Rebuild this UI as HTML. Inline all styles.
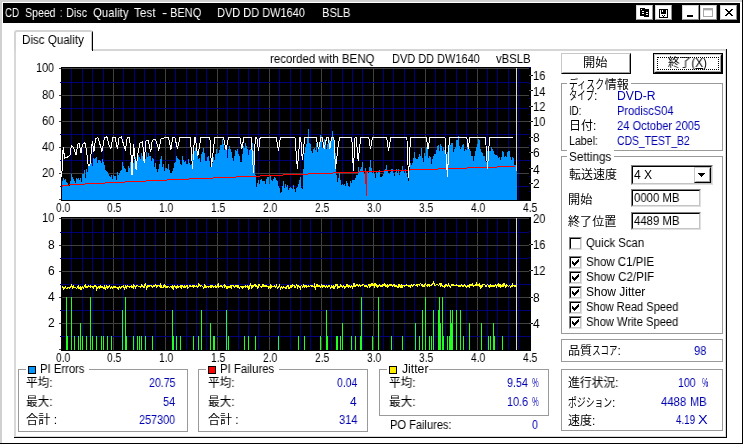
<!DOCTYPE html>
<html lang="ja"><head><meta charset="utf-8"><title>CD Speed : Disc Quality Test</title>
<style>
html,body{margin:0;padding:0;background:#fff}
body{width:743px;height:444px;overflow:hidden;position:relative;font-family:"Liberation Sans", "Noto Sans CJK JP", "IPAGothic", sans-serif;font-size:12px;line-height:12px;color:#000}
.win{position:absolute;left:0;top:0;width:743px;height:444px;background:#fff;overflow:hidden}
.t{will-change:transform}
.abs,.win div,.win span.t,.win svg{position:absolute}
.t{white-space:pre;transform-origin:0 0;line-height:12px;height:12px}
.k{display:inline-block;height:12px;vertical-align:top;position:relative}
.k span{display:inline-block;transform-origin:0 0;position:absolute;left:0;top:0;white-space:pre}
.t13{font-size:13px;line-height:13px;height:13px}
.glab{background:transparent}
.grp{border:1px solid #9a9a9a;box-sizing:border-box}
.btn{box-sizing:border-box;background:#fff;border:1px solid;border-color:#c8c8c8 #000 #000 #c8c8c8}
.btn i{position:absolute;left:0;top:0;right:0;bottom:0;border:1px solid;border-color:#fff #a0a0a0 #a0a0a0 #fff}
.sunk{box-sizing:border-box;background:#fff;border:1px solid;border-color:#808080 #e0e0e0 #e0e0e0 #808080}
.sunk i{position:absolute;left:0;top:0;right:0;bottom:0;border:1px solid;border-color:#000 #c4c4c4 #c4c4c4 #000}
.cb{width:13px;height:13px}
.tb{box-sizing:border-box;width:17px;height:15px;background:#fff;border:1px solid;border-color:#d8d8d8 #909090 #909090 #d8d8d8}
</style></head><body>
<div class="win">
<div style="left:0;top:0;width:743px;height:2px;background:#d0d0d0"></div><div style="left:0;top:0;width:2px;height:444px;background:#d0d0d0"></div><div style="left:742px;top:0;width:1px;height:444px;background:#000"></div><div style="left:0;top:443px;width:743px;height:1px;background:#000"></div><div class="titlebar" style="left:3px;top:3px;width:737px;height:20px;background:#000"></div>
<div class="tb" style="left:636px;top:5px"><svg width="17" height="15" style="left:-1px;top:-1px" shape-rendering="crispEdges"><rect x="4" y="3" width="5" height="8" fill="#000"/><rect x="8" y="4" width="5" height="8" fill="#000"/><rect x="6" y="6" width="2" height="1" fill="#fff"/><rect x="6" y="8" width="2" height="1" fill="#fff"/><rect x="10" y="7" width="2" height="1" fill="#fff"/><rect x="10" y="9" width="2" height="1" fill="#fff"/><rect x="5" y="4" width="1" height="1" fill="#fff"/></svg></div><div class="tb" style="left:655px;top:5px"><svg width="17" height="15" style="left:-1px;top:-1px" shape-rendering="crispEdges"><rect x="4" y="4" width="9" height="9" fill="#000"/><rect x="5" y="5" width="1" height="7" fill="#fff"/><rect x="11" y="5" width="1" height="7" fill="#fff"/><rect x="6" y="9" width="5" height="3" fill="#fff"/><rect x="7" y="5" width="1" height="2" fill="#fff"/><rect x="7" y="10" width="1" height="1" fill="#000"/><rect x="8" y="11" width="1" height="1" fill="#000"/><rect x="9" y="10" width="1" height="1" fill="#000"/></svg></div><div class="tb" style="left:682px;top:5px"><svg width="17" height="15" style="left:-1px;top:-1px" shape-rendering="crispEdges"><rect x="5" y="10" width="6" height="2" fill="#000"/></svg></div><div class="tb" style="left:700px;top:5px"><svg width="17" height="15" style="left:-1px;top:-1px" shape-rendering="crispEdges"><rect x="3" y="3" width="10" height="2" fill="#a8a8a8"/><rect x="3" y="5" width="1" height="7" fill="#a8a8a8"/><rect x="12" y="5" width="1" height="7" fill="#a8a8a8"/><rect x="3" y="11" width="10" height="1" fill="#a8a8a8"/><rect x="4" y="5" width="8" height="1" fill="#e0e0e0"/></svg></div><div class="tb" style="left:720px;top:5px"><svg width="17" height="15" style="left:-1px;top:-1px" shape-rendering="crispEdges"><rect x="5" y="4" width="1" height="1" fill="#000"/><rect x="6" y="4" width="1" height="1" fill="#000"/><rect x="11" y="4" width="1" height="1" fill="#000"/><rect x="12" y="4" width="1" height="1" fill="#000"/><rect x="6" y="5" width="1" height="1" fill="#000"/><rect x="7" y="5" width="1" height="1" fill="#000"/><rect x="10" y="5" width="1" height="1" fill="#000"/><rect x="11" y="5" width="1" height="1" fill="#000"/><rect x="7" y="6" width="1" height="1" fill="#000"/><rect x="8" y="6" width="1" height="1" fill="#000"/><rect x="9" y="6" width="1" height="1" fill="#000"/><rect x="10" y="6" width="1" height="1" fill="#000"/><rect x="8" y="7" width="1" height="1" fill="#000"/><rect x="9" y="7" width="1" height="1" fill="#000"/><rect x="7" y="8" width="1" height="1" fill="#000"/><rect x="8" y="8" width="1" height="1" fill="#000"/><rect x="9" y="8" width="1" height="1" fill="#000"/><rect x="10" y="8" width="1" height="1" fill="#000"/><rect x="6" y="9" width="1" height="1" fill="#000"/><rect x="7" y="9" width="1" height="1" fill="#000"/><rect x="10" y="9" width="1" height="1" fill="#000"/><rect x="11" y="9" width="1" height="1" fill="#000"/><rect x="5" y="10" width="1" height="1" fill="#000"/><rect x="6" y="10" width="1" height="1" fill="#000"/><rect x="11" y="10" width="1" height="1" fill="#000"/><rect x="12" y="10" width="1" height="1" fill="#000"/></svg></div>
<div style="left:15px;top:49px;width:711px;height:2px;background:#d6d6d6"></div><div style="left:14px;top:32px;width:2px;height:405px;background:#d8d8d8"></div><div style="left:14px;top:437px;width:713px;height:1px;background:#000"></div><div style="left:15px;top:436px;width:711px;height:1px;background:#d8d8d8"></div><div style="left:726px;top:49px;width:1px;height:389px;background:#000"></div><div style="left:725px;top:50px;width:1px;height:387px;background:#d8d8d8"></div><div style="left:14px;top:30px;width:79px;height:21px;box-sizing:border-box;background:#fff;border-top:2px solid #d4d4d4;border-left:2px solid #d4d4d4;border-right:1px solid #000;border-radius:3px 3px 0 0"></div><div style="left:91px;top:33px;width:1px;height:17px;background:#c8c8c8"></div><div style="left:16px;top:49px;width:75px;height:2px;background:#fff"></div>
<svg width="743" height="444" viewBox="0 0 743 444" style="left:0;top:0" shape-rendering="crispEdges"><rect x="61" y="67" width="470" height="134" fill="#000"/><rect x="71" y="68" width="1" height="132" fill="#000078"/><rect x="82" y="68" width="1" height="132" fill="#000078"/><rect x="92" y="68" width="1" height="132" fill="#000078"/><rect x="103" y="68" width="1" height="132" fill="#000078"/><rect x="113" y="68" width="1" height="132" fill="#404040"/><rect x="123" y="68" width="1" height="132" fill="#000078"/><rect x="134" y="68" width="1" height="132" fill="#000078"/><rect x="144" y="68" width="1" height="132" fill="#000078"/><rect x="155" y="68" width="1" height="132" fill="#000078"/><rect x="165" y="68" width="1" height="132" fill="#404040"/><rect x="175" y="68" width="1" height="132" fill="#000078"/><rect x="186" y="68" width="1" height="132" fill="#000078"/><rect x="196" y="68" width="1" height="132" fill="#000078"/><rect x="206" y="68" width="1" height="132" fill="#000078"/><rect x="217" y="68" width="1" height="132" fill="#404040"/><rect x="227" y="68" width="1" height="132" fill="#000078"/><rect x="238" y="68" width="1" height="132" fill="#000078"/><rect x="248" y="68" width="1" height="132" fill="#000078"/><rect x="258" y="68" width="1" height="132" fill="#000078"/><rect x="269" y="68" width="1" height="132" fill="#404040"/><rect x="279" y="68" width="1" height="132" fill="#000078"/><rect x="290" y="68" width="1" height="132" fill="#000078"/><rect x="300" y="68" width="1" height="132" fill="#000078"/><rect x="310" y="68" width="1" height="132" fill="#000078"/><rect x="321" y="68" width="1" height="132" fill="#404040"/><rect x="331" y="68" width="1" height="132" fill="#000078"/><rect x="342" y="68" width="1" height="132" fill="#000078"/><rect x="352" y="68" width="1" height="132" fill="#000078"/><rect x="362" y="68" width="1" height="132" fill="#000078"/><rect x="373" y="68" width="1" height="132" fill="#404040"/><rect x="383" y="68" width="1" height="132" fill="#000078"/><rect x="393" y="68" width="1" height="132" fill="#000078"/><rect x="404" y="68" width="1" height="132" fill="#000078"/><rect x="414" y="68" width="1" height="132" fill="#000078"/><rect x="425" y="68" width="1" height="132" fill="#404040"/><rect x="435" y="68" width="1" height="132" fill="#000078"/><rect x="445" y="68" width="1" height="132" fill="#000078"/><rect x="456" y="68" width="1" height="132" fill="#000078"/><rect x="466" y="68" width="1" height="132" fill="#000078"/><rect x="477" y="68" width="1" height="132" fill="#404040"/><rect x="487" y="68" width="1" height="132" fill="#000078"/><rect x="497" y="68" width="1" height="132" fill="#000078"/><rect x="508" y="68" width="1" height="132" fill="#000078"/><rect x="518" y="68" width="1" height="132" fill="#000078"/><rect x="62" y="68" width="467" height="1" fill="#404040"/><rect x="59" y="68" width="2" height="1" fill="#404040"/><rect x="62" y="82" width="467" height="1" fill="#000078"/><rect x="60" y="82" width="2" height="1" fill="#000078"/><rect x="62" y="95" width="467" height="1" fill="#404040"/><rect x="59" y="95" width="2" height="1" fill="#404040"/><rect x="62" y="108" width="467" height="1" fill="#000078"/><rect x="60" y="108" width="2" height="1" fill="#000078"/><rect x="62" y="121" width="467" height="1" fill="#404040"/><rect x="59" y="121" width="2" height="1" fill="#404040"/><rect x="62" y="134" width="467" height="1" fill="#000078"/><rect x="60" y="134" width="2" height="1" fill="#000078"/><rect x="62" y="147" width="467" height="1" fill="#404040"/><rect x="59" y="147" width="2" height="1" fill="#404040"/><rect x="62" y="160" width="467" height="1" fill="#000078"/><rect x="60" y="160" width="2" height="1" fill="#000078"/><rect x="62" y="173" width="467" height="1" fill="#404040"/><rect x="59" y="173" width="2" height="1" fill="#404040"/><rect x="62" y="186" width="467" height="1" fill="#000078"/><rect x="60" y="186" width="2" height="1" fill="#000078"/><rect x="59" y="199" width="2" height="1" fill="#404040"/><rect x="61" y="217" width="470" height="134" fill="#000"/><rect x="71" y="218" width="1" height="132" fill="#000078"/><rect x="82" y="218" width="1" height="132" fill="#000078"/><rect x="92" y="218" width="1" height="132" fill="#000078"/><rect x="103" y="218" width="1" height="132" fill="#000078"/><rect x="113" y="218" width="1" height="132" fill="#404040"/><rect x="123" y="218" width="1" height="132" fill="#000078"/><rect x="134" y="218" width="1" height="132" fill="#000078"/><rect x="144" y="218" width="1" height="132" fill="#000078"/><rect x="155" y="218" width="1" height="132" fill="#000078"/><rect x="165" y="218" width="1" height="132" fill="#404040"/><rect x="175" y="218" width="1" height="132" fill="#000078"/><rect x="186" y="218" width="1" height="132" fill="#000078"/><rect x="196" y="218" width="1" height="132" fill="#000078"/><rect x="206" y="218" width="1" height="132" fill="#000078"/><rect x="217" y="218" width="1" height="132" fill="#404040"/><rect x="227" y="218" width="1" height="132" fill="#000078"/><rect x="238" y="218" width="1" height="132" fill="#000078"/><rect x="248" y="218" width="1" height="132" fill="#000078"/><rect x="258" y="218" width="1" height="132" fill="#000078"/><rect x="269" y="218" width="1" height="132" fill="#404040"/><rect x="279" y="218" width="1" height="132" fill="#000078"/><rect x="290" y="218" width="1" height="132" fill="#000078"/><rect x="300" y="218" width="1" height="132" fill="#000078"/><rect x="310" y="218" width="1" height="132" fill="#000078"/><rect x="321" y="218" width="1" height="132" fill="#404040"/><rect x="331" y="218" width="1" height="132" fill="#000078"/><rect x="342" y="218" width="1" height="132" fill="#000078"/><rect x="352" y="218" width="1" height="132" fill="#000078"/><rect x="362" y="218" width="1" height="132" fill="#000078"/><rect x="373" y="218" width="1" height="132" fill="#404040"/><rect x="383" y="218" width="1" height="132" fill="#000078"/><rect x="393" y="218" width="1" height="132" fill="#000078"/><rect x="404" y="218" width="1" height="132" fill="#000078"/><rect x="414" y="218" width="1" height="132" fill="#000078"/><rect x="425" y="218" width="1" height="132" fill="#404040"/><rect x="435" y="218" width="1" height="132" fill="#000078"/><rect x="445" y="218" width="1" height="132" fill="#000078"/><rect x="456" y="218" width="1" height="132" fill="#000078"/><rect x="466" y="218" width="1" height="132" fill="#000078"/><rect x="477" y="218" width="1" height="132" fill="#404040"/><rect x="487" y="218" width="1" height="132" fill="#000078"/><rect x="497" y="218" width="1" height="132" fill="#000078"/><rect x="508" y="218" width="1" height="132" fill="#000078"/><rect x="518" y="218" width="1" height="132" fill="#000078"/><rect x="62" y="218" width="467" height="1" fill="#404040"/><rect x="59" y="218" width="2" height="1" fill="#404040"/><rect x="62" y="232" width="467" height="1" fill="#000078"/><rect x="60" y="232" width="2" height="1" fill="#000078"/><rect x="62" y="245" width="467" height="1" fill="#404040"/><rect x="59" y="245" width="2" height="1" fill="#404040"/><rect x="62" y="258" width="467" height="1" fill="#000078"/><rect x="60" y="258" width="2" height="1" fill="#000078"/><rect x="62" y="271" width="467" height="1" fill="#404040"/><rect x="59" y="271" width="2" height="1" fill="#404040"/><rect x="62" y="284" width="467" height="1" fill="#000078"/><rect x="60" y="284" width="2" height="1" fill="#000078"/><rect x="62" y="297" width="467" height="1" fill="#404040"/><rect x="59" y="297" width="2" height="1" fill="#404040"/><rect x="62" y="310" width="467" height="1" fill="#000078"/><rect x="60" y="310" width="2" height="1" fill="#000078"/><rect x="62" y="323" width="467" height="1" fill="#404040"/><rect x="59" y="323" width="2" height="1" fill="#404040"/><rect x="62" y="336" width="467" height="1" fill="#000078"/><rect x="60" y="336" width="2" height="1" fill="#000078"/><rect x="59" y="349" width="2" height="1" fill="#404040"/><rect x="529" y="191" width="2" height="1" fill="#000078"/><rect x="529" y="183" width="2" height="1" fill="#606060"/><rect x="531" y="183" width="2" height="1" fill="#000"/><rect x="529" y="176" width="2" height="1" fill="#000078"/><rect x="529" y="168" width="2" height="1" fill="#606060"/><rect x="531" y="168" width="2" height="1" fill="#000"/><rect x="529" y="160" width="2" height="1" fill="#000078"/><rect x="529" y="152" width="2" height="1" fill="#606060"/><rect x="531" y="152" width="2" height="1" fill="#000"/><rect x="529" y="145" width="2" height="1" fill="#000078"/><rect x="529" y="137" width="2" height="1" fill="#606060"/><rect x="531" y="137" width="2" height="1" fill="#000"/><rect x="529" y="129" width="2" height="1" fill="#000078"/><rect x="529" y="121" width="2" height="1" fill="#606060"/><rect x="531" y="121" width="2" height="1" fill="#000"/><rect x="529" y="114" width="2" height="1" fill="#000078"/><rect x="529" y="106" width="2" height="1" fill="#606060"/><rect x="531" y="106" width="2" height="1" fill="#000"/><rect x="529" y="98" width="2" height="1" fill="#000078"/><rect x="529" y="90" width="2" height="1" fill="#606060"/><rect x="531" y="90" width="2" height="1" fill="#000"/><rect x="529" y="83" width="2" height="1" fill="#000078"/><rect x="529" y="75" width="2" height="1" fill="#606060"/><rect x="531" y="75" width="2" height="1" fill="#000"/><rect x="529" y="67" width="2" height="1" fill="#000078"/><rect x="529" y="336" width="2" height="1" fill="#000078"/><rect x="529" y="323" width="2" height="1" fill="#606060"/><rect x="531" y="323" width="2" height="1" fill="#000"/><rect x="529" y="310" width="2" height="1" fill="#000078"/><rect x="529" y="297" width="2" height="1" fill="#606060"/><rect x="531" y="297" width="2" height="1" fill="#000"/><rect x="529" y="284" width="2" height="1" fill="#000078"/><rect x="529" y="270" width="2" height="1" fill="#606060"/><rect x="531" y="270" width="2" height="1" fill="#000"/><rect x="529" y="257" width="2" height="1" fill="#000078"/><rect x="529" y="244" width="2" height="1" fill="#606060"/><rect x="531" y="244" width="2" height="1" fill="#000"/><rect x="529" y="231" width="2" height="1" fill="#000078"/><path d="M62 200V181h1V178h1V180h1V179h1V182h1V183h1V185h1V186h1V181h1V174h1V177h1V179h1V181h1V183h1V178h1V179h1V178h1V180h1V178h1V182h1V174h1V174h1V170h1V178h1V169h1V172h1V165h1V165h1V163h1V163h1V166h1V158h1V159h1V158h1V157h1V163h1V160h1V160h1V161h1V163h1V159h1V162h1V165h1V170h1V171h1V172h1V174h1V176h1V177h1V175h1V179h1V175h1V176h1V176h1V180h1V172h1V175h1V173h1V171h1V170h1V162h1V166h1V168h1V169h1V172h1V172h1V166h1V168h1V162h1V164h1V162h1V163h1V160h1V157h1V161h1V161h1V155h1V157h1V159h1V153h1V156h1V158h1V156h1V159h1V152h1V157h1V153h1V156h1V156h1V161h1V158h1V159h1V167h1V163h1V169h1V172h1V169h1V164h1V159h1V156h1V167h1V164h1V171h1V168h1V168h1V169h1V164h1V170h1V173h1V173h1V171h1V168h1V163h1V162h1V156h1V158h1V159h1V160h1V164h1V165h1V156h1V160h1V162h1V161h1V164h1V164h1V159h1V163h1V165h1V164h1V154h1V154h1V151h1V148h1V150h1V156h1V159h1V158h1V162h1V154h1V152h1V148h1V153h1V161h1V161h1V157h1V156h1V161h1V167h1V164h1V163h1V157h1V160h1V154h1V149h1V154h1V153h1V150h1V145h1V145h1V139h1V144h1V150h1V149h1V148h1V158h1V149h1V146h1V149h1V152h1V158h1V161h1V156h1V150h1V151h1V149h1V154h1V156h1V162h1V162h1V154h1V146h1V148h1V143h1V146h1V149h1V155h1V150h1V149h1V147h1V143h1V151h1V159h1V175h1V187h1V183h1V180h1V184h1V180h1V179h1V181h1V181h1V181h1V184h1V179h1V177h1V177h1V184h1V176h1V180h1V181h1V179h1V177h1V178h1V180h1V181h1V186h1V188h1V193h1V192h1V186h1V181h1V188h1V184h1V187h1V185h1V190h1V188h1V187h1V188h1V189h1V185h1V189h1V192h1V188h1V187h1V184h1V180h1V177h1V188h1V189h1V169h1V153h1V147h1V144h1V138h1V129h1V143h1V144h1V151h1V153h1V149h1V148h1V150h1V143h1V152h1V149h1V144h1V135h1V141h1V148h1V143h1V139h1V140h1V149h1V144h1V140h1V140h1V141h1V139h1V131h1V140h1V151h1V153h1V175h1V182h1V178h1V173h1V180h1V185h1V184h1V185h1V184h1V186h1V181h1V183h1V186h1V187h1V181h1V183h1V180h1V180h1V180h1V178h1V175h1V175h1V167h1V172h1V169h1V167h1V162h1V172h1V174h1V168h1V172h1V171h1V173h1V167h1V160h1V168h1V173h1V171h1V174h1V178h1V172h1V173h1V171h1V170h1V177h1V177h1V176h1V174h1V170h1V169h1V165h1V170h1V173h1V174h1V172h1V169h1V169h1V173h1V176h1V172h1V169h1V173h1V169h1V175h1V172h1V171h1V166h1V170h1V173h1V169h1V173h1V177h1V181h1V171h1V163h1V165h1V163h1V158h1V152h1V158h1V159h1V159h1V157h1V154h1V156h1V148h1V158h1V162h1V153h1V156h1V147h1V145h1V158h1V156h1V157h1V164h1V159h1V156h1V154h1V154h1V150h1V146h1V145h1V151h1V144h1V146h1V151h1V147h1V150h1V153h1V155h1V152h1V145h1V140h1V145h1V143h1V143h1V152h1V149h1V147h1V140h1V140h1V136h1V146h1V149h1V147h1V145h1V144h1V151h1V149h1V150h1V145h1V149h1V149h1V151h1V156h1V156h1V161h1V156h1V151h1V147h1V144h1V139h1V140h1V149h1V152h1V153h1V156h1V156h1V161h1V162h1V151h1V150h1V151h1V151h1V147h1V149h1V151h1V154h1V155h1V155h1V156h1V158h1V157h1V160h1V157h1V151h1V152h1V157h1V156h1V157h1V152h1V151h1V151h1V157h1V160h1V157h1V158h1V165h1V165h1V162h1V200Z" fill="#0096ff"/></svg><svg width="743" height="444" viewBox="0 0 743 444" style="left:0;top:0"><path d="M62 185h7v1h-7zM69 184h16v1h-16zM85 183h20v1h-20zM105 182h20v1h-20zM125 181h21v1h-21zM146 180h21v1h-21zM167 179h22v1h-22zM189 178h24v1h-24zM213 177h23v1h-23zM236 176h24v1h-24zM260 175h23v1h-23zM283 174h25v1h-25zM308 173h25v1h-25zM333 172h26v1h-26zM359 171h25v1h-25zM384 170h26v1h-26zM410 169h28v1h-28zM438 168h29v1h-29zM467 167h30v1h-30zM497 166h18v1h-18zM365 171h2v13h-2zM366 184h1v12h-1zM62 185h1v2h-1z" fill="#ff0000" shape-rendering="crispEdges"/><polyline points="61.5,176.6 62.3,168.5 63.1,147.5 64.7,158.0 67.2,157.2 70.4,154.8 71.2,145.8 73.6,147.5 76.1,154.8 77.7,144.2 79.3,143.4 80.9,153.1 82.6,144.2 85.0,142.6 86.6,150.7 88.2,166.1 89.9,165.3 92.3,141.0 93.9,152.3 95.5,138.5 98.0,137.7 100.4,145.8 102.0,151.5 104.5,137.7 106.9,136.9 109.3,145.8 110.9,149.1 112.6,137.7 115.0,136.9 117.4,149.1 119.1,137.7 121.5,136.9 123.9,145.8 125.5,149.9 127.2,137.7 129.6,137.7 131.2,157.2 132.0,175.0 133.6,144.2 136.1,170.2 137.7,154.8 140.1,142.6 142.6,141.8 144.2,162.9 145.8,141.0 148.2,140.2 150.7,152.3 152.3,140.2 155.5,139.4 158.8,149.9 161.2,138.5 165.3,137.7 168.5,137.7 170.9,149.9 172.6,137.7 174.8,137.7 175.0,137.7 177.4,149.1 179.9,137.7 190.4,137.7 192.5,168.5 194.5,137.7 195.3,137.7 197.7,156.4 200.9,137.7 209.9,137.7 211.5,166.9 214.7,137.7 223.6,137.7 226.1,149.9 228.5,137.7 239.9,137.7 241.8,149.1 243.9,137.7 251.2,137.7 253.6,173.4 255.3,137.7 256.9,137.7 258.5,150.7 260.1,137.7 276.3,137.7 278.5,150.7 280.4,137.7 294.8,137.7 295.0,137.7 297.4,168.5 299.9,137.7 300.7,137.7 302.3,160.4 304.7,137.7 316.1,137.7 318.5,149.1 320.9,137.7 322.2,137.7 324.2,149.1 326.6,137.7 328.2,137.7 329.9,149.1 331.5,137.7 333.9,137.7 335.5,168.5 338.0,147.5 339.6,137.7 351.8,137.7 353.4,171.0 355.0,137.7 356.3,137.7 358.2,161.2 360.7,137.7 368.8,137.7 370.4,149.1 372.5,137.7 386.6,137.7 388.6,150.7 390.7,137.7 406.9,137.7 408.5,177.5 410.5,137.7 414.8,137.7 415.0,137.7 426.4,137.7 428.0,149.1 429.9,137.7 445.0,137.7 447.4,176.6 449.4,137.7 466.9,137.7 468.2,149.1 469.8,137.7 485.5,137.7 487.5,168.5 489.6,137.7 512.8,137.7" fill="none" stroke="#fff" stroke-width="1" shape-rendering="crispEdges"/><rect x="516" y="68" width="1" height="103" fill="#d8d8d8" shape-rendering="crispEdges"/><rect x="516" y="218" width="1" height="132" fill="#d8d8d8" shape-rendering="crispEdges"/><rect x="66" y="297" width="1" height="53" fill="#20ff20" shape-rendering="crispEdges"/><rect x="67" y="336" width="1" height="14" fill="#20ff20" shape-rendering="crispEdges"/><rect x="71" y="297" width="1" height="53" fill="#20ff20" shape-rendering="crispEdges"/><rect x="74" y="336" width="1" height="14" fill="#20ff20" shape-rendering="crispEdges"/><rect x="78" y="336" width="1" height="14" fill="#20ff20" shape-rendering="crispEdges"/><rect x="80" y="323" width="1" height="27" fill="#20ff20" shape-rendering="crispEdges"/><rect x="82" y="336" width="1" height="14" fill="#20ff20" shape-rendering="crispEdges"/><rect x="86" y="336" width="1" height="14" fill="#20ff20" shape-rendering="crispEdges"/><rect x="90" y="297" width="1" height="53" fill="#20ff20" shape-rendering="crispEdges"/><rect x="92" y="336" width="1" height="14" fill="#20ff20" shape-rendering="crispEdges"/><rect x="96" y="336" width="1" height="14" fill="#20ff20" shape-rendering="crispEdges"/><rect x="101" y="336" width="1" height="14" fill="#20ff20" shape-rendering="crispEdges"/><rect x="103" y="336" width="1" height="14" fill="#20ff20" shape-rendering="crispEdges"/><rect x="107" y="336" width="1" height="14" fill="#20ff20" shape-rendering="crispEdges"/><rect x="111" y="336" width="1" height="14" fill="#20ff20" shape-rendering="crispEdges"/><rect x="122" y="310" width="1" height="40" fill="#20ff20" shape-rendering="crispEdges"/><rect x="125" y="297" width="1" height="53" fill="#20ff20" shape-rendering="crispEdges"/><rect x="126" y="336" width="1" height="14" fill="#20ff20" shape-rendering="crispEdges"/><rect x="133" y="336" width="1" height="14" fill="#20ff20" shape-rendering="crispEdges"/><rect x="137" y="336" width="1" height="14" fill="#20ff20" shape-rendering="crispEdges"/><rect x="139" y="336" width="1" height="14" fill="#20ff20" shape-rendering="crispEdges"/><rect x="141" y="336" width="1" height="14" fill="#20ff20" shape-rendering="crispEdges"/><rect x="145" y="336" width="1" height="14" fill="#20ff20" shape-rendering="crispEdges"/><rect x="152" y="336" width="1" height="14" fill="#20ff20" shape-rendering="crispEdges"/><rect x="172" y="310" width="1" height="40" fill="#20ff20" shape-rendering="crispEdges"/><rect x="173" y="336" width="1" height="14" fill="#20ff20" shape-rendering="crispEdges"/><rect x="176" y="336" width="1" height="14" fill="#20ff20" shape-rendering="crispEdges"/><rect x="180" y="336" width="1" height="14" fill="#20ff20" shape-rendering="crispEdges"/><rect x="193" y="336" width="1" height="14" fill="#20ff20" shape-rendering="crispEdges"/><rect x="198" y="336" width="1" height="14" fill="#20ff20" shape-rendering="crispEdges"/><rect x="201" y="310" width="1" height="40" fill="#20ff20" shape-rendering="crispEdges"/><rect x="210" y="323" width="1" height="27" fill="#20ff20" shape-rendering="crispEdges"/><rect x="213" y="336" width="1" height="14" fill="#20ff20" shape-rendering="crispEdges"/><rect x="214" y="336" width="1" height="14" fill="#20ff20" shape-rendering="crispEdges"/><rect x="226" y="310" width="1" height="40" fill="#20ff20" shape-rendering="crispEdges"/><rect x="228" y="336" width="1" height="14" fill="#20ff20" shape-rendering="crispEdges"/><rect x="244" y="336" width="1" height="14" fill="#20ff20" shape-rendering="crispEdges"/><rect x="248" y="336" width="1" height="14" fill="#20ff20" shape-rendering="crispEdges"/><rect x="255" y="336" width="1" height="14" fill="#20ff20" shape-rendering="crispEdges"/><rect x="278" y="336" width="1" height="14" fill="#20ff20" shape-rendering="crispEdges"/><rect x="298" y="336" width="1" height="14" fill="#20ff20" shape-rendering="crispEdges"/><rect x="304" y="336" width="1" height="14" fill="#20ff20" shape-rendering="crispEdges"/><rect x="320" y="336" width="1" height="14" fill="#20ff20" shape-rendering="crispEdges"/><rect x="326" y="310" width="1" height="40" fill="#20ff20" shape-rendering="crispEdges"/><rect x="327" y="336" width="1" height="14" fill="#20ff20" shape-rendering="crispEdges"/><rect x="336" y="336" width="1" height="14" fill="#20ff20" shape-rendering="crispEdges"/><rect x="337" y="336" width="1" height="14" fill="#20ff20" shape-rendering="crispEdges"/><rect x="340" y="336" width="1" height="14" fill="#20ff20" shape-rendering="crispEdges"/><rect x="342" y="323" width="1" height="27" fill="#20ff20" shape-rendering="crispEdges"/><rect x="351" y="336" width="1" height="14" fill="#20ff20" shape-rendering="crispEdges"/><rect x="355" y="336" width="1" height="14" fill="#20ff20" shape-rendering="crispEdges"/><rect x="360" y="336" width="1" height="14" fill="#20ff20" shape-rendering="crispEdges"/><rect x="361" y="297" width="1" height="53" fill="#20ff20" shape-rendering="crispEdges"/><rect x="372" y="336" width="1" height="14" fill="#20ff20" shape-rendering="crispEdges"/><rect x="378" y="297" width="1" height="53" fill="#20ff20" shape-rendering="crispEdges"/><rect x="391" y="336" width="1" height="14" fill="#20ff20" shape-rendering="crispEdges"/><rect x="402" y="336" width="1" height="14" fill="#20ff20" shape-rendering="crispEdges"/><rect x="415" y="323" width="1" height="27" fill="#20ff20" shape-rendering="crispEdges"/><rect x="419" y="336" width="1" height="14" fill="#20ff20" shape-rendering="crispEdges"/><rect x="422" y="310" width="1" height="40" fill="#20ff20" shape-rendering="crispEdges"/><rect x="425" y="297" width="1" height="53" fill="#20ff20" shape-rendering="crispEdges"/><rect x="429" y="336" width="1" height="14" fill="#20ff20" shape-rendering="crispEdges"/><rect x="431" y="336" width="1" height="14" fill="#20ff20" shape-rendering="crispEdges"/><rect x="433" y="310" width="1" height="40" fill="#20ff20" shape-rendering="crispEdges"/><rect x="438" y="310" width="1" height="40" fill="#20ff20" shape-rendering="crispEdges"/><rect x="439" y="297" width="1" height="53" fill="#20ff20" shape-rendering="crispEdges"/><rect x="440" y="323" width="1" height="27" fill="#20ff20" shape-rendering="crispEdges"/><rect x="442" y="297" width="1" height="53" fill="#20ff20" shape-rendering="crispEdges"/><rect x="443" y="336" width="1" height="14" fill="#20ff20" shape-rendering="crispEdges"/><rect x="447" y="336" width="1" height="14" fill="#20ff20" shape-rendering="crispEdges"/><rect x="449" y="336" width="1" height="14" fill="#20ff20" shape-rendering="crispEdges"/><rect x="450" y="310" width="1" height="40" fill="#20ff20" shape-rendering="crispEdges"/><rect x="451" y="323" width="1" height="27" fill="#20ff20" shape-rendering="crispEdges"/><rect x="452" y="310" width="1" height="40" fill="#20ff20" shape-rendering="crispEdges"/><rect x="456" y="310" width="1" height="40" fill="#20ff20" shape-rendering="crispEdges"/><rect x="460" y="310" width="1" height="40" fill="#20ff20" shape-rendering="crispEdges"/><rect x="463" y="336" width="1" height="14" fill="#20ff20" shape-rendering="crispEdges"/><rect x="469" y="323" width="1" height="27" fill="#20ff20" shape-rendering="crispEdges"/><rect x="481" y="323" width="1" height="27" fill="#20ff20" shape-rendering="crispEdges"/><rect x="488" y="336" width="1" height="14" fill="#20ff20" shape-rendering="crispEdges"/><rect x="490" y="336" width="1" height="14" fill="#20ff20" shape-rendering="crispEdges"/><rect x="493" y="323" width="1" height="27" fill="#20ff20" shape-rendering="crispEdges"/><rect x="494" y="336" width="1" height="14" fill="#20ff20" shape-rendering="crispEdges"/><rect x="502" y="336" width="1" height="14" fill="#20ff20" shape-rendering="crispEdges"/><polyline points="62.5,287.5 62.5,286.5 63.5,288.5 63.5,289.5 64.5,288.5 64.5,288.5 65.5,286.5 65.5,287.5 66.5,288.5 66.5,288.5 67.5,288.5 67.5,287.5 68.5,287.5 68.5,287.5 69.5,287.5 69.5,288.5 70.5,287.5 70.5,287.5 71.5,285.5 71.5,285.5 72.5,287.5 72.5,288.5 73.5,285.5 73.5,287.5 74.5,287.5 74.5,287.5 75.5,287.5 75.5,287.5 76.5,288.5 76.5,288.5 77.5,287.5 77.5,286.5 78.5,285.5 78.5,288.5 79.5,288.5 79.5,288.5 80.5,286.5 80.5,289.5 81.5,289.5 81.5,287.5 82.5,286.5 82.5,286.5 83.5,288.5 83.5,287.5 84.5,286.5 84.5,285.5 85.5,284.5 85.5,287.5 86.5,287.5 86.5,286.5 87.5,286.5 87.5,287.5 88.5,285.5 88.5,286.5 89.5,286.5 89.5,286.5 90.5,287.5 90.5,285.5 91.5,286.5 91.5,286.5 92.5,287.5 92.5,286.5 93.5,288.5 93.5,287.5 94.5,285.5 94.5,285.5 95.5,286.5 95.5,285.5 96.5,286.5 96.5,290.5 97.5,287.5 97.5,287.5 98.5,287.5 98.5,286.5 99.5,286.5 99.5,288.5 100.5,287.5 100.5,285.5 101.5,287.5 101.5,287.5 102.5,286.5 102.5,287.5 103.5,287.5 103.5,288.5 104.5,285.5 104.5,288.5 105.5,287.5 105.5,289.5 106.5,285.5 106.5,287.5 107.5,286.5 107.5,288.5 108.5,286.5 108.5,287.5 109.5,286.5 109.5,285.5 110.5,288.5 110.5,287.5 111.5,286.5 111.5,287.5 112.5,287.5 112.5,288.5 113.5,286.5 113.5,286.5 114.5,287.5 114.5,286.5 115.5,286.5 115.5,287.5 116.5,287.5 116.5,287.5 117.5,287.5 117.5,288.5 118.5,289.5 118.5,288.5 119.5,286.5 119.5,287.5 120.5,287.5 120.5,288.5 121.5,286.5 121.5,286.5 122.5,286.5 122.5,286.5 123.5,286.5 123.5,285.5 124.5,289.5 124.5,288.5 125.5,286.5 125.5,286.5 126.5,288.5 126.5,286.5 127.5,286.5 127.5,285.5 128.5,286.5 128.5,286.5 129.5,287.5 129.5,286.5 130.5,286.5 130.5,286.5 131.5,285.5 131.5,287.5 132.5,286.5 132.5,287.5 133.5,284.5 133.5,288.5 134.5,285.5 134.5,286.5 135.5,286.5 135.5,288.5 136.5,285.5 136.5,285.5 137.5,285.5 137.5,285.5 138.5,286.5 138.5,286.5 139.5,286.5 139.5,286.5 140.5,286.5 140.5,287.5 141.5,285.5 141.5,284.5 142.5,286.5 142.5,285.5 143.5,287.5 143.5,286.5 144.5,287.5 144.5,285.5 145.5,283.5 145.5,285.5 146.5,286.5 146.5,289.5 147.5,285.5 147.5,286.5 148.5,286.5 148.5,285.5 149.5,286.5 149.5,285.5 150.5,285.5 150.5,285.5 151.5,285.5 151.5,286.5 152.5,287.5 152.5,287.5 153.5,285.5 153.5,285.5 154.5,286.5 154.5,286.5 155.5,284.5 155.5,285.5 156.5,285.5 156.5,287.5 157.5,286.5 157.5,285.5 158.5,285.5 158.5,285.5 159.5,285.5 159.5,286.5 160.5,287.5 160.5,283.5 161.5,286.5 161.5,287.5 162.5,287.5 162.5,287.5 163.5,287.5 163.5,285.5 164.5,286.5 164.5,284.5 165.5,287.5 165.5,285.5 166.5,287.5 166.5,286.5 167.5,286.5 167.5,287.5 168.5,286.5 168.5,286.5 169.5,287.5 169.5,287.5 170.5,286.5 170.5,286.5 171.5,287.5 171.5,287.5 172.5,285.5 172.5,287.5 173.5,289.5 173.5,287.5 174.5,285.5 174.5,286.5 175.5,286.5 175.5,287.5 176.5,286.5 176.5,288.5 177.5,286.5 177.5,285.5 178.5,287.5 178.5,286.5 179.5,286.5 179.5,286.5 180.5,287.5 180.5,285.5 181.5,288.5 181.5,285.5 182.5,285.5 182.5,286.5 183.5,287.5 183.5,286.5 184.5,287.5 184.5,285.5 185.5,287.5 185.5,286.5 186.5,286.5 186.5,285.5 187.5,285.5 187.5,288.5 188.5,287.5 188.5,287.5 189.5,286.5 189.5,285.5 190.5,285.5 190.5,286.5 191.5,286.5 191.5,286.5 192.5,286.5 192.5,285.5 193.5,287.5 193.5,285.5 194.5,285.5 194.5,286.5 195.5,286.5 195.5,286.5 196.5,285.5 196.5,286.5 197.5,286.5 197.5,287.5 198.5,286.5 198.5,283.5 199.5,285.5 199.5,285.5 200.5,286.5 200.5,285.5 201.5,285.5 201.5,285.5 202.5,286.5 202.5,286.5 203.5,287.5 203.5,288.5 204.5,287.5 204.5,284.5 205.5,286.5 205.5,287.5 206.5,286.5 206.5,287.5 207.5,286.5 207.5,286.5 208.5,287.5 208.5,286.5 209.5,286.5 209.5,286.5 210.5,287.5 210.5,285.5 211.5,287.5 211.5,285.5 212.5,285.5 212.5,285.5 213.5,287.5 213.5,287.5 214.5,286.5 214.5,286.5 215.5,285.5 215.5,287.5 216.5,286.5 216.5,287.5 217.5,286.5 217.5,285.5 218.5,283.5 218.5,287.5 219.5,286.5 219.5,286.5 220.5,286.5 220.5,285.5 221.5,286.5 221.5,285.5 222.5,287.5 222.5,286.5 223.5,285.5 223.5,285.5 224.5,284.5 224.5,287.5 225.5,286.5 225.5,285.5 226.5,286.5 226.5,288.5 227.5,286.5 227.5,288.5 228.5,286.5 228.5,287.5 229.5,286.5 229.5,287.5 230.5,285.5 230.5,286.5 231.5,288.5 231.5,285.5 232.5,285.5 232.5,285.5 233.5,285.5 233.5,286.5 234.5,287.5 234.5,286.5 235.5,285.5 235.5,286.5 236.5,286.5 236.5,285.5 237.5,285.5 237.5,287.5 238.5,285.5 238.5,286.5 239.5,288.5 239.5,287.5 240.5,286.5 240.5,286.5 241.5,286.5 241.5,286.5 242.5,288.5 242.5,286.5 243.5,287.5 243.5,286.5 244.5,286.5 244.5,286.5 245.5,287.5 245.5,285.5 246.5,286.5 246.5,286.5 247.5,287.5 247.5,285.5 248.5,286.5 248.5,289.5 249.5,287.5 249.5,285.5 250.5,285.5 250.5,283.5 251.5,287.5 251.5,287.5 252.5,285.5 252.5,287.5 253.5,285.5 253.5,285.5 254.5,285.5 254.5,284.5 255.5,286.5 255.5,284.5 256.5,285.5 256.5,286.5 257.5,286.5 257.5,288.5 258.5,287.5 258.5,284.5 259.5,284.5 259.5,285.5 260.5,286.5 260.5,286.5 261.5,286.5 261.5,287.5 262.5,284.5 262.5,286.5 263.5,284.5 263.5,286.5 264.5,286.5 264.5,285.5 265.5,285.5 265.5,286.5 266.5,286.5 266.5,285.5 267.5,286.5 267.5,286.5 268.5,286.5 268.5,288.5 269.5,286.5 269.5,287.5 270.5,284.5 270.5,288.5 271.5,287.5 271.5,285.5 272.5,286.5 272.5,286.5 273.5,286.5 273.5,286.5 274.5,285.5 274.5,286.5 275.5,287.5 275.5,287.5 276.5,285.5 276.5,285.5 277.5,288.5 277.5,288.5 278.5,287.5 278.5,286.5 279.5,286.5 279.5,284.5 280.5,289.5 280.5,287.5 281.5,287.5 281.5,286.5 282.5,288.5 282.5,288.5 283.5,287.5 283.5,286.5 284.5,287.5 284.5,287.5 285.5,288.5 285.5,287.5 286.5,288.5 286.5,286.5 287.5,285.5 287.5,286.5 288.5,285.5 288.5,288.5 289.5,287.5 289.5,288.5 290.5,286.5 290.5,285.5 291.5,285.5 291.5,287.5 292.5,286.5 292.5,284.5 293.5,285.5 293.5,285.5 294.5,285.5 294.5,287.5 295.5,286.5 295.5,287.5 296.5,284.5 296.5,284.5 297.5,285.5 297.5,288.5 298.5,285.5 298.5,286.5 299.5,287.5 299.5,286.5 300.5,289.5 300.5,286.5 301.5,285.5 301.5,285.5 302.5,286.5 302.5,287.5 303.5,286.5 303.5,284.5 304.5,285.5 304.5,287.5 305.5,285.5 305.5,285.5 306.5,285.5 306.5,287.5 307.5,286.5 307.5,286.5 308.5,286.5 308.5,285.5 309.5,286.5 309.5,286.5 310.5,285.5 310.5,285.5 311.5,286.5 311.5,285.5 312.5,285.5 312.5,286.5 313.5,286.5 313.5,286.5 314.5,287.5 314.5,283.5 315.5,288.5 315.5,288.5 316.5,285.5 316.5,284.5 317.5,284.5 317.5,286.5 318.5,285.5 318.5,286.5 319.5,286.5 319.5,285.5 320.5,286.5 320.5,287.5 321.5,284.5 321.5,286.5 322.5,285.5 322.5,287.5 323.5,285.5 323.5,285.5 324.5,285.5 324.5,286.5 325.5,287.5 325.5,286.5 326.5,285.5 326.5,286.5 327.5,286.5 327.5,287.5 328.5,285.5 328.5,286.5 329.5,285.5 329.5,286.5 330.5,287.5 330.5,288.5 331.5,287.5 331.5,285.5 332.5,286.5 332.5,286.5 333.5,288.5 333.5,285.5 334.5,287.5 334.5,287.5 335.5,284.5 335.5,286.5 336.5,284.5 336.5,285.5 337.5,284.5 337.5,288.5 338.5,286.5 338.5,287.5 339.5,286.5 339.5,287.5 340.5,285.5 340.5,284.5 341.5,286.5 341.5,285.5 342.5,286.5 342.5,287.5 343.5,285.5 343.5,286.5 344.5,286.5 344.5,288.5 345.5,287.5 345.5,287.5 346.5,284.5 346.5,286.5 347.5,286.5 347.5,284.5 348.5,286.5 348.5,287.5 349.5,286.5 349.5,285.5 350.5,286.5 350.5,287.5 351.5,285.5 351.5,285.5 352.5,286.5 352.5,288.5 353.5,284.5 353.5,283.5 354.5,283.5 354.5,286.5 355.5,285.5 355.5,286.5 356.5,284.5 356.5,285.5 357.5,284.5 357.5,285.5 358.5,286.5 358.5,285.5 359.5,285.5 359.5,284.5 360.5,285.5 360.5,286.5 361.5,285.5 361.5,285.5 362.5,285.5 362.5,284.5 363.5,284.5 363.5,284.5 364.5,285.5 364.5,286.5 365.5,285.5 365.5,286.5 366.5,286.5 366.5,285.5 367.5,286.5 367.5,287.5 368.5,284.5 368.5,285.5 369.5,284.5 369.5,287.5 370.5,286.5 370.5,284.5 371.5,285.5 371.5,283.5 372.5,283.5 372.5,285.5 373.5,285.5 373.5,284.5 374.5,287.5 374.5,283.5 375.5,283.5 375.5,285.5 376.5,286.5 376.5,284.5 377.5,287.5 377.5,285.5 378.5,285.5 378.5,286.5 379.5,285.5 379.5,284.5 380.5,285.5 380.5,286.5 381.5,286.5 381.5,285.5 382.5,286.5 382.5,284.5 383.5,284.5 383.5,285.5 384.5,285.5 384.5,283.5 385.5,286.5 385.5,284.5 386.5,286.5 386.5,286.5 387.5,287.5 387.5,284.5 388.5,285.5 388.5,286.5 389.5,284.5 389.5,284.5 390.5,285.5 390.5,284.5 391.5,285.5 391.5,284.5 392.5,286.5 392.5,285.5 393.5,285.5 393.5,284.5 394.5,286.5 394.5,284.5 395.5,286.5 395.5,285.5 396.5,286.5 396.5,285.5 397.5,286.5 397.5,287.5 398.5,284.5 398.5,287.5 399.5,285.5 399.5,284.5 400.5,286.5 400.5,286.5 401.5,284.5 401.5,287.5 402.5,287.5 402.5,285.5 403.5,285.5 403.5,285.5 404.5,286.5 404.5,285.5 405.5,285.5 405.5,285.5 406.5,284.5 406.5,285.5 407.5,285.5 407.5,285.5 408.5,285.5 408.5,286.5 409.5,285.5 409.5,286.5 410.5,287.5 410.5,285.5 411.5,284.5 411.5,285.5 412.5,285.5 412.5,286.5 413.5,284.5 413.5,284.5 414.5,284.5 414.5,284.5 415.5,285.5 415.5,285.5 416.5,284.5 416.5,285.5 417.5,286.5 417.5,284.5 418.5,284.5 418.5,284.5 419.5,285.5 419.5,284.5 420.5,283.5 420.5,283.5 421.5,284.5 421.5,284.5 422.5,286.5 422.5,284.5 423.5,286.5 423.5,285.5 424.5,286.5 424.5,285.5 425.5,283.5 425.5,284.5 426.5,285.5 426.5,285.5 427.5,286.5 427.5,284.5 428.5,285.5 428.5,284.5 429.5,284.5 429.5,286.5 430.5,285.5 430.5,285.5 431.5,285.5 431.5,284.5 432.5,284.5 432.5,283.5 433.5,283.5 433.5,281.5 434.5,285.5 434.5,284.5 435.5,285.5 435.5,285.5 436.5,284.5 436.5,284.5 437.5,284.5 437.5,284.5 438.5,285.5 438.5,285.5 439.5,284.5 439.5,283.5 440.5,283.5 440.5,286.5 441.5,284.5 441.5,284.5 442.5,286.5 442.5,285.5 443.5,286.5 443.5,286.5 444.5,285.5 444.5,287.5 445.5,285.5 445.5,284.5 446.5,285.5 446.5,284.5 447.5,285.5 447.5,286.5 448.5,283.5 448.5,284.5 449.5,286.5 449.5,286.5 450.5,286.5 450.5,287.5 451.5,284.5 451.5,284.5 452.5,284.5 452.5,285.5 453.5,285.5 453.5,284.5 454.5,285.5 454.5,285.5 455.5,285.5 455.5,285.5 456.5,285.5 456.5,284.5 457.5,285.5 457.5,285.5 458.5,286.5 458.5,285.5 459.5,285.5 459.5,286.5 460.5,286.5 460.5,285.5 461.5,285.5 461.5,284.5 462.5,285.5 462.5,286.5 463.5,286.5 463.5,285.5 464.5,284.5 464.5,285.5 465.5,285.5 465.5,286.5 466.5,287.5 466.5,286.5 467.5,286.5 467.5,285.5 468.5,285.5 468.5,285.5 469.5,287.5 469.5,284.5 470.5,284.5 470.5,285.5 471.5,285.5 471.5,285.5 472.5,283.5 472.5,284.5 473.5,286.5 473.5,286.5 474.5,285.5 474.5,285.5 475.5,284.5 475.5,285.5 476.5,285.5 476.5,282.5 477.5,285.5 477.5,285.5 478.5,285.5 478.5,284.5 479.5,283.5 479.5,286.5 480.5,285.5 480.5,288.5 481.5,285.5 481.5,287.5 482.5,285.5 482.5,284.5 483.5,284.5 483.5,284.5 484.5,284.5 484.5,284.5 485.5,285.5 485.5,286.5 486.5,286.5 486.5,285.5 487.5,284.5 487.5,284.5 488.5,285.5 488.5,285.5 489.5,287.5 489.5,285.5 490.5,284.5 490.5,286.5 491.5,285.5 491.5,286.5 492.5,286.5 492.5,285.5 493.5,285.5 493.5,286.5 494.5,286.5 494.5,285.5 495.5,284.5 495.5,284.5 496.5,286.5 496.5,286.5 497.5,284.5 497.5,284.5 498.5,283.5 498.5,286.5 499.5,284.5 499.5,286.5 500.5,287.5 500.5,284.5 501.5,286.5 501.5,286.5 502.5,286.5 502.5,284.5 503.5,283.5 503.5,286.5 504.5,285.5 504.5,283.5 505.5,286.5 505.5,287.5 506.5,284.5 506.5,286.5 507.5,285.5 507.5,285.5 508.5,286.5 508.5,286.5 509.5,285.5 509.5,285.5 510.5,286.5 510.5,287.5 511.5,286.5 511.5,286.5 512.5,283.5 512.5,286.5 513.5,285.5 513.5,285.5 514.5,285.5 514.5,286.5 515.5,286.5 515.5,285.5 516.5,286.5" fill="none" stroke="#ffff10" stroke-width="1" shape-rendering="crispEdges"/></svg>
<div class="grp" style="left:18px;top:369px;width:170px;height:63px"></div><div class="grp" style="left:198px;top:369px;width:170px;height:63px"></div><div class="grp" style="left:379px;top:369px;width:170px;height:47px"></div><div style="left:26px;top:363px;width:63px;height:12px;background:#fff"></div><div style="left:28px;top:366px;width:8px;height:8px;box-sizing:border-box;border:1px solid #000;background:#0096ff"></div><div style="left:206px;top:363px;width:73px;height:12px;background:#fff"></div><div style="left:208px;top:366px;width:8px;height:8px;box-sizing:border-box;border:1px solid #000;background:#ff0000"></div><div style="left:387px;top:363px;width:42px;height:12px;background:#fff"></div><div style="left:389px;top:366px;width:8px;height:8px;box-sizing:border-box;border:1px solid #000;background:#ffee00"></div><div class="grp" style="left:561px;top:83px;width:162px;height:68px"></div><div class="grp" style="left:561px;top:156px;width:162px;height:178px"></div><div class="grp" style="left:561px;top:339px;width:162px;height:23px"></div><div class="grp" style="left:561px;top:369px;width:162px;height:62px"></div><div style="left:567px;top:77px;width:64px;height:13px;background:#fff"></div><div style="left:567px;top:150px;width:47px;height:13px;background:#fff"></div><div class="btn" style="left:561px;top:53px;width:70px;height:21px"><i></i></div><div style="left:653px;top:53px;width:70px;height:21px;background:#000"></div><div class="btn" style="left:654px;top:54px;width:68px;height:19px"><i></i></div><div style="left:657px;top:57px;width:62px;height:13px;box-sizing:border-box;border:1px dotted #000"></div><div class="sunk" style="left:631px;top:165px;width:82px;height:20px"><i></i></div><div class="btn" style="left:694px;top:167px;width:17px;height:16px"><i></i><svg width="15" height="14" style="left:0;top:0" shape-rendering="crispEdges"><path d="M3 5h7v1h-7zM4 6h5v1h-5zM5 7h3v1h-3zM6 8h1v1h-1z" fill="#000"/></svg></div><div class="sunk" style="left:631px;top:189px;width:70px;height:18px"><i></i></div><div class="sunk" style="left:631px;top:212px;width:70px;height:18px"><i></i></div><div class="sunk cb" style="left:569px;top:237px"><i></i></div><div class="sunk cb" style="left:569px;top:256px"><i></i><svg width="13" height="13" style="left:-1px;top:-1px" shape-rendering="crispEdges"><path d="M3 5h1v3h-1zM4 6h1v3h-1zM5 7h1v3h-1zM6 6h1v3h-1zM7 5h1v3h-1zM8 4h1v3h-1zM9 3h1v3h-1z" fill="#000"/></svg></div><div class="sunk cb" style="left:569px;top:271px"><i></i><svg width="13" height="13" style="left:-1px;top:-1px" shape-rendering="crispEdges"><path d="M3 5h1v3h-1zM4 6h1v3h-1zM5 7h1v3h-1zM6 6h1v3h-1zM7 5h1v3h-1zM8 4h1v3h-1zM9 3h1v3h-1z" fill="#000"/></svg></div><div class="sunk cb" style="left:569px;top:286px"><i></i><svg width="13" height="13" style="left:-1px;top:-1px" shape-rendering="crispEdges"><path d="M3 5h1v3h-1zM4 6h1v3h-1zM5 7h1v3h-1zM6 6h1v3h-1zM7 5h1v3h-1zM8 4h1v3h-1zM9 3h1v3h-1z" fill="#000"/></svg></div><div class="sunk cb" style="left:569px;top:301px"><i></i><svg width="13" height="13" style="left:-1px;top:-1px" shape-rendering="crispEdges"><path d="M3 5h1v3h-1zM4 6h1v3h-1zM5 7h1v3h-1zM6 6h1v3h-1zM7 5h1v3h-1zM8 4h1v3h-1zM9 3h1v3h-1z" fill="#000"/></svg></div><div class="sunk cb" style="left:569px;top:316px"><i></i><svg width="13" height="13" style="left:-1px;top:-1px" shape-rendering="crispEdges"><path d="M3 5h1v3h-1zM4 6h1v3h-1zM5 7h1v3h-1zM6 6h1v3h-1zM7 5h1v3h-1zM8 4h1v3h-1zM9 3h1v3h-1z" fill="#000"/></svg></div>
<span class="t t13" id="t0" style="left:4.5px;top:6.0px;color:#fff;transform:scaleX(0.7454)">CD</span>
<span class="t t13" id="t1" style="left:24.5px;top:6.0px;color:#fff;transform:scaleX(0.8140)">Speed</span>
<span class="t t13" id="t2" style="left:59.7px;top:6.0px;color:#fff;transform:scaleX(0.6069)">:</span>
<span class="t t13" id="t3" style="left:65.8px;top:6.0px;color:#fff;transform:scaleX(0.8346)">Disc</span>
<span class="t t13" id="t4" style="left:92.6px;top:6.0px;color:#fff;transform:scaleX(0.8797)">Quality</span>
<span class="t t13" id="t5" style="left:134.2px;top:6.0px;color:#fff;transform:scaleX(0.9017)">Test</span>
<span class="t t13" id="t6" style="left:162.1px;top:6.0px;color:#fff;transform:scaleX(1.1971)">-</span>
<span class="t t13" id="t7" style="left:169.7px;top:6.0px;color:#fff;transform:scaleX(0.8495)">BENQ</span>
<span class="t t13" id="t8" style="left:217.0px;top:6.0px;color:#fff;transform:scaleX(0.8459)">DVD DD DW1640</span>
<span class="t t13" id="t9" style="left:322.0px;top:6.0px;color:#fff;transform:scaleX(0.8571)">BSLB</span>
<span class="t" id="t10" style="left:22.0px;top:34.0px;color:#000;transform:scaleX(0.9670)">Disc Quality</span>
<span class="t" id="t11" style="left:270.3px;top:53.0px;color:#000;transform:scaleX(0.9553)">recorded with BENQ</span>
<span class="t" id="t12" style="left:391.9px;top:53.0px;color:#000;transform:scaleX(0.9143)">DVD DD DW1640</span>
<span class="t" id="t13" style="left:495.7px;top:53.0px;color:#000;transform:scaleX(0.9404)">vBSLB</span>
<span class="t" id="t14" style="left:36.4px;top:62.3px;color:#000;transform:scaleX(0.9036)">100</span>
<span class="t" id="t15" style="left:42.1px;top:88.5px;color:#000;transform:scaleX(0.9282)">80</span>
<span class="t" id="t16" style="left:42.1px;top:114.7px;color:#000;transform:scaleX(0.9282)">60</span>
<span class="t" id="t17" style="left:42.1px;top:140.9px;color:#000;transform:scaleX(0.9282)">40</span>
<span class="t" id="t18" style="left:42.1px;top:167.1px;color:#000;transform:scaleX(0.9282)">20</span>
<span class="t" id="t19" style="left:532.8px;top:69.7px;color:#000;transform:scaleX(0.9282)">16</span>
<span class="t" id="t20" style="left:532.8px;top:86.3px;color:#000;transform:scaleX(0.9282)">14</span>
<span class="t" id="t21" style="left:532.8px;top:100.8px;color:#000;transform:scaleX(0.9282)">12</span>
<span class="t" id="t22" style="left:532.8px;top:116.3px;color:#000;transform:scaleX(0.9282)">10</span>
<span class="t" id="t23" style="left:532.8px;top:131.8px;color:#000;transform:scaleX(1.0019)">8</span>
<span class="t" id="t24" style="left:532.8px;top:147.3px;color:#000;transform:scaleX(1.0019)">6</span>
<span class="t" id="t25" style="left:532.8px;top:163.6px;color:#000;transform:scaleX(1.0019)">4</span>
<span class="t" id="t26" style="left:532.8px;top:178.4px;color:#000;transform:scaleX(1.0019)">2</span>
<span class="t" id="t27" style="left:55.6px;top:202.0px;color:#000;transform:scaleX(0.8509)">0.0</span>
<span class="t" id="t28" style="left:55.6px;top:352.0px;color:#000;transform:scaleX(0.8509)">0.0</span>
<span class="t" id="t29" style="left:106.9px;top:202.0px;color:#000;transform:scaleX(0.8509)">0.5</span>
<span class="t" id="t30" style="left:106.9px;top:352.0px;color:#000;transform:scaleX(0.8509)">0.5</span>
<span class="t" id="t31" style="left:158.9px;top:202.0px;color:#000;transform:scaleX(0.8509)">1.0</span>
<span class="t" id="t32" style="left:158.9px;top:352.0px;color:#000;transform:scaleX(0.8509)">1.0</span>
<span class="t" id="t33" style="left:210.9px;top:202.0px;color:#000;transform:scaleX(0.8509)">1.5</span>
<span class="t" id="t34" style="left:210.9px;top:352.0px;color:#000;transform:scaleX(0.8509)">1.5</span>
<span class="t" id="t35" style="left:262.9px;top:202.0px;color:#000;transform:scaleX(0.8509)">2.0</span>
<span class="t" id="t36" style="left:262.9px;top:352.0px;color:#000;transform:scaleX(0.8509)">2.0</span>
<span class="t" id="t37" style="left:314.9px;top:202.0px;color:#000;transform:scaleX(0.8509)">2.5</span>
<span class="t" id="t38" style="left:314.9px;top:352.0px;color:#000;transform:scaleX(0.8509)">2.5</span>
<span class="t" id="t39" style="left:366.9px;top:202.0px;color:#000;transform:scaleX(0.8509)">3.0</span>
<span class="t" id="t40" style="left:366.9px;top:352.0px;color:#000;transform:scaleX(0.8509)">3.0</span>
<span class="t" id="t41" style="left:418.9px;top:202.0px;color:#000;transform:scaleX(0.8509)">3.5</span>
<span class="t" id="t42" style="left:418.9px;top:352.0px;color:#000;transform:scaleX(0.8509)">3.5</span>
<span class="t" id="t43" style="left:470.9px;top:202.0px;color:#000;transform:scaleX(0.8509)">4.0</span>
<span class="t" id="t44" style="left:470.9px;top:352.0px;color:#000;transform:scaleX(0.8509)">4.0</span>
<span class="t" id="t45" style="left:522.9px;top:202.0px;color:#000;transform:scaleX(0.8509)">4.5</span>
<span class="t" id="t46" style="left:522.9px;top:352.0px;color:#000;transform:scaleX(0.8509)">4.5</span>
<span class="t" id="t47" style="left:42.1px;top:212.3px;color:#000;transform:scaleX(0.9282)">10</span>
<span class="t" id="t48" style="left:47.8px;top:238.5px;color:#000;transform:scaleX(1.0019)">8</span>
<span class="t" id="t49" style="left:47.8px;top:264.7px;color:#000;transform:scaleX(1.0019)">6</span>
<span class="t" id="t50" style="left:47.8px;top:290.9px;color:#000;transform:scaleX(1.0019)">4</span>
<span class="t" id="t51" style="left:47.8px;top:317.1px;color:#000;transform:scaleX(1.0019)">2</span>
<span class="t" id="t52" style="left:532.8px;top:212.9px;color:#000;transform:scaleX(0.9282)">20</span>
<span class="t" id="t53" style="left:532.8px;top:239.1px;color:#000;transform:scaleX(0.9282)">16</span>
<span class="t" id="t54" style="left:532.8px;top:265.3px;color:#000;transform:scaleX(0.9282)">12</span>
<span class="t" id="t55" style="left:532.8px;top:291.5px;color:#000;transform:scaleX(1.0019)">8</span>
<span class="t" id="t56" style="left:532.8px;top:317.7px;color:#000;transform:scaleX(1.0019)">4</span>
<span class="t glab" id="t57" style="left:40.2px;top:363.3px;color:#000;transform:scaleX(0.9399)">PI Errors</span>
<span class="t glab" id="t58" style="left:220.2px;top:363.3px;color:#000;transform:scaleX(0.9449)">PI Failures</span>
<span class="t glab" id="t59" style="left:401.5px;top:363.3px;color:#000;transform:scaleX(1.0186)">Jitter</span>
<span class="t" id="t60" style="left:26.1px;top:377.3px;color:#000;transform:scaleX(0.9728)">平均:</span>
<span class="t" id="t61" style="left:26.1px;top:395.7px;color:#000;transform:scaleX(0.9728)">最大:</span>
<span class="t" id="t62" style="left:207.9px;top:377.3px;color:#000;transform:scaleX(0.9728)">平均:</span>
<span class="t" id="t63" style="left:207.9px;top:395.7px;color:#000;transform:scaleX(0.9728)">最大:</span>
<span class="t" id="t64" style="left:388.7px;top:377.3px;color:#000;transform:scaleX(0.9728)">平均:</span>
<span class="t" id="t65" style="left:388.7px;top:395.7px;color:#000;transform:scaleX(0.9728)">最大:</span>
<span class="t" id="t66" style="left:26.1px;top:413.6px;color:#000;transform:scaleX(1.0172)">合計 :</span>
<span class="t" id="t67" style="left:207.9px;top:413.6px;color:#000;transform:scaleX(0.9911)">合計 :</span>
<span class="t" id="t68" style="left:149.0px;top:377.3px;color:#0000b0;transform:scaleX(0.8824)">20.75</span>
<span class="t" id="t69" style="left:162.7px;top:395.7px;color:#0000b0;transform:scaleX(0.9057)">54</span>
<span class="t" id="t70" style="left:139.3px;top:413.6px;color:#0000b0;transform:scaleX(0.9039)">257300</span>
<span class="t" id="t71" style="left:337.2px;top:377.3px;color:#0000b0;transform:scaleX(0.8690)">0.04</span>
<span class="t" id="t72" style="left:350.4px;top:395.7px;color:#0000b0;transform:scaleX(0.9570)">4</span>
<span class="t" id="t73" style="left:339.0px;top:413.6px;color:#0000b0;transform:scaleX(0.9236)">314</span>
<span class="t" id="t74" style="left:507.1px;top:377.3px;color:#0000b0;transform:scaleX(0.8904)">9.54</span>
<span class="t" id="t75" style="left:531.7px;top:377.3px;color:#0000b0;transform:scaleX(0.6372)">%</span>
<span class="t" id="t76" style="left:507.3px;top:395.7px;color:#0000b0;transform:scaleX(0.8990)">10.6</span>
<span class="t" id="t77" style="left:531.7px;top:395.7px;color:#0000b0;transform:scaleX(0.6372)">%</span>
<span class="t" id="t78" style="left:389.5px;top:419.0px;color:#000;transform:scaleX(0.9237)">PO Failures:</span>
<span class="t" id="t79" style="left:531.5px;top:418.8px;color:#0000b0;transform:scaleX(0.8822)">0</span>
<span class="t" id="t80" style="left:583.1px;top:57.0px;color:#000;transform:scaleX(1.0160)">開始</span>
<span class="t" id="t81" style="left:667.5px;top:57.0px;color:#000;transform:scaleX(0.9746)">終了(<u>X</u>)</span>
<span class="t glab" id="t82" style="left:568.7px;top:78.6px;color:#000;transform:scaleX(1.0048)"><span class="k" style="width:35.5px"><span style="transform:scaleX(0.740)">ディスク</span></span>情報</span>
<span class="t" id="t83" style="left:568.7px;top:90.0px;color:#000;transform:scaleX(1.0236)"><span class="k" style="width:24.5px"><span style="transform:scaleX(0.681)">タイプ</span></span>:</span>
<span class="t" id="t84" style="left:569.1px;top:105.0px;color:#000;transform:scaleX(0.8081)">ID:</span>
<span class="t" id="t85" style="left:568.5px;top:120.0px;color:#000;transform:scaleX(0.9874)">日付:</span>
<span class="t" id="t86" style="left:569.1px;top:135.0px;color:#000;transform:scaleX(0.8837)">Label:</span>
<span class="t" id="t87" style="left:617.2px;top:90.0px;color:#0000b0;transform:scaleX(1.0132)">DVD-R</span>
<span class="t" id="t88" style="left:617.0px;top:105.0px;color:#0000b0;transform:scaleX(0.9206)">ProdiscS04</span>
<span class="t" id="t89" style="left:617.0px;top:120.0px;color:#0000b0;transform:scaleX(0.9295)">24 October 2005</span>
<span class="t" id="t90" style="left:616.5px;top:135.0px;color:#0000b0;transform:scaleX(0.8652)">CDS_TEST_B2</span>
<span class="t glab" id="t91" style="left:569.1px;top:151.0px;color:#000;transform:scaleX(0.9779)">Settings</span>
<span class="t" id="t92" style="left:568.5px;top:168.5px;color:#000;transform:scaleX(0.9955)">転送速度</span>
<span class="t" id="t93" style="left:634.2px;top:169.0px;color:#000;transform:scaleX(1.0102)">4 X</span>
<span class="t" id="t94" style="left:568.0px;top:194.3px;color:#000;transform:scaleX(1.0118)">開始</span>
<span class="t" id="t95" style="left:633.5px;top:192.0px;color:#000;transform:scaleX(0.9473)">0000 MB</span>
<span class="t" id="t96" style="left:568.0px;top:216.3px;color:#000;transform:scaleX(1.0059)">終了位置</span>
<span class="t" id="t97" style="left:633.5px;top:215.0px;color:#000;transform:scaleX(0.9473)">4489 MB</span>
<span class="t" id="t98" style="left:586.2px;top:237.0px;color:#000;transform:scaleX(0.9469)">Quick Scan</span>
<span class="t" id="t99" style="left:586.2px;top:256.0px;color:#000;transform:scaleX(0.9555)">Show C1/PIE</span>
<span class="t" id="t100" style="left:586.2px;top:271.0px;color:#000;transform:scaleX(0.9646)">Show C2/PIF</span>
<span class="t" id="t101" style="left:586.2px;top:286.0px;color:#000;transform:scaleX(0.9939)">Show Jitter</span>
<span class="t" id="t102" style="left:586.2px;top:301.0px;color:#000;transform:scaleX(0.9223)">Show Read Speed</span>
<span class="t" id="t103" style="left:586.2px;top:316.0px;color:#000;transform:scaleX(0.9307)">Show Write Speed</span>
<span class="t" id="t104" style="left:568.0px;top:345.3px;color:#000;transform:scaleX(1.0084)">品質<span class="k" style="width:25.0px"><span style="transform:scaleX(0.694)">スコア</span></span>:</span>
<span class="t" id="t105" style="left:693.8px;top:344.8px;color:#0000b0;transform:scaleX(0.9282)">98</span>
<span class="t" id="t106" style="left:568.0px;top:377.0px;color:#000;transform:scaleX(0.9836)">進行状況:</span>
<span class="t" id="t107" style="left:678.3px;top:376.8px;color:#0000b0;transform:scaleX(0.8786)">100</span>
<span class="t" id="t108" style="left:701.7px;top:376.8px;color:#0000b0;transform:scaleX(0.5810)">%</span>
<span class="t" id="t109" style="left:568.0px;top:396.5px;color:#000;transform:scaleX(1.0140)"><span class="k" style="width:43.5px"><span style="transform:scaleX(0.725)">ポジション</span></span>:</span>
<span class="t" id="t110" style="left:661.3px;top:395.6px;color:#0000b0;transform:scaleX(0.9437)">4488</span>
<span class="t" id="t111" style="left:689.7px;top:395.6px;color:#0000b0;transform:scaleX(0.9167)">MB</span>
<span class="t" id="t112" style="left:568.0px;top:414.8px;color:#000;transform:scaleX(0.9838)">速度:</span>
<span class="t" id="t113" style="left:676.2px;top:414.1px;color:#0000b0;transform:scaleX(0.8134)">4.19</span>
<span class="t" id="t114" style="left:698.4px;top:414.1px;color:#0000b0;transform:scaleX(1.2101)">X</span>
</div>
</body></html>
